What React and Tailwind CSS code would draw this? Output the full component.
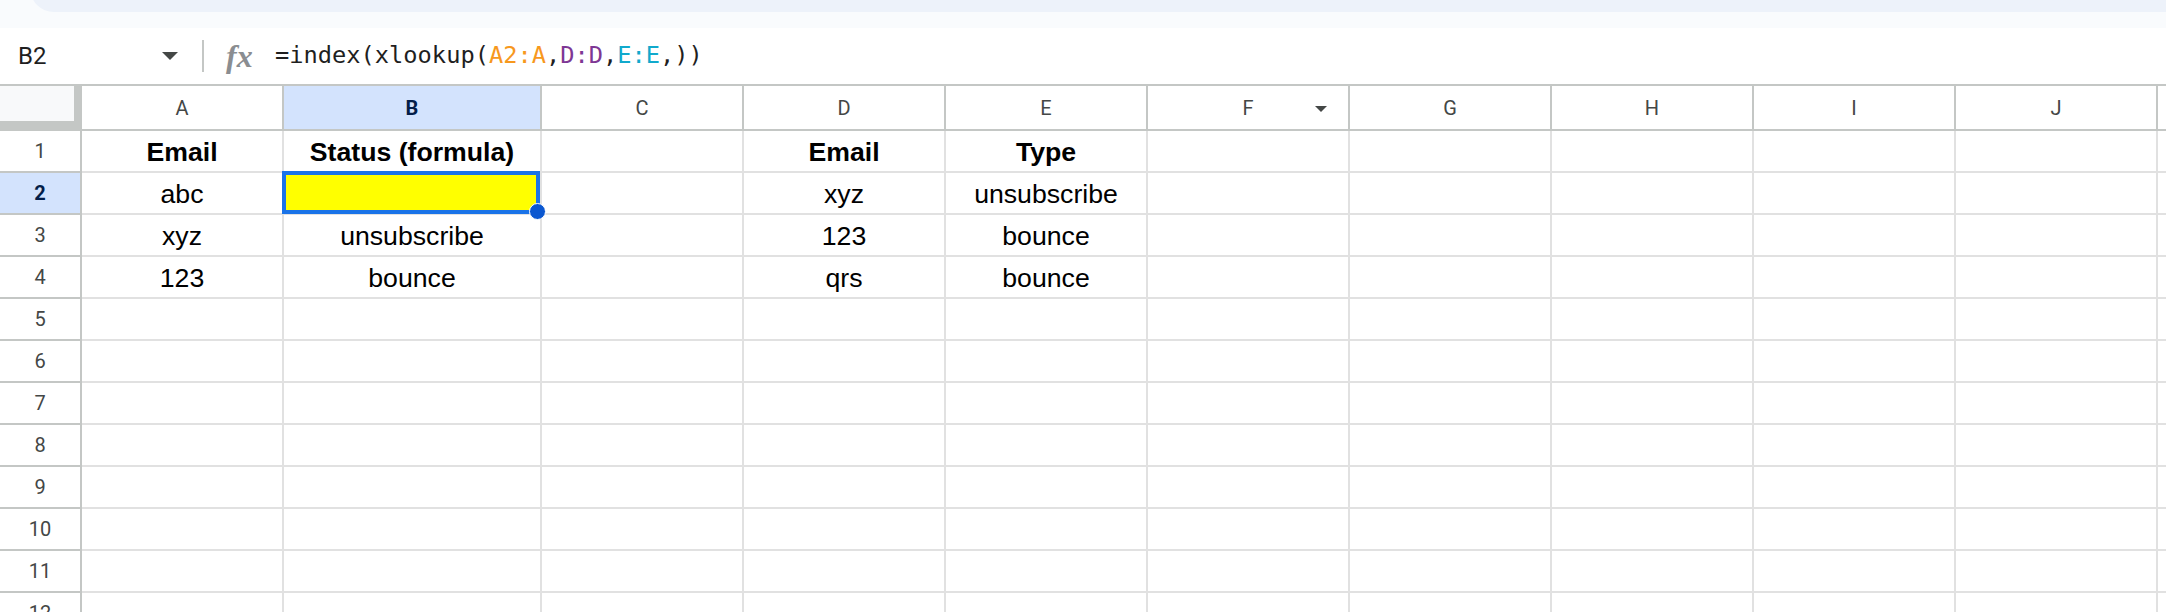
const COLS = ["A", "B", "C", "D", "E", "F", "G", "H", "I", "J", "K"];
const GRID = "grid grid-cols-[82px_202px_258px_202px_202px_202px_202px_202px_202px_202px_202px_202px]";

const data = {
  1: { A: "Email", B: "Status (formula)", D: "Email", E: "Type" },
  2: { A: "abc", D: "xyz", E: "unsubscribe" },
  3: { A: "xyz", B: "unsubscribe", D: "123", E: "bounce" },
  4: { A: "123", B: "bounce", D: "qrs", E: "bounce" },
};

const Caret = ({ className }) => (
  <svg width="16" height="8" viewBox="0 0 16 8" className={className}>
    <polygon points="0,0 16,0 8,8" fill="#444746" />
  </svg>
);

const FormulaBar = () => (
  <div className="flex h-[56px] items-center bg-white">
    <div className="flex w-[190px] items-center justify-between pl-[18px] pr-[12px]">
      <span className="font-['Roboto'] text-[24px] text-[#1f1f1f]">B2</span>
      <Caret />
    </div>
    <div className="ml-[12px] h-[32px] w-[2px] bg-[#c4c7c5]" />
    <span className="ml-[22px] w-[30px] font-['Liberation_Serif'] text-[32px] font-bold italic leading-none text-[#8a8d91]">
      fx
    </span>
    <span className="ml-[19px] font-['DejaVu_Sans_Mono'] text-[23.7px] text-[#1f1f1f]">
      =index(xlookup(<span className="text-[#f7981d]">A2:A</span>,<span className="text-[#7e3794]">D:D</span>,
      <span className="text-[#11a9cc]">E:E</span>,))
    </span>
  </div>
);

const HeaderRow = () => (
  <div className={`${GRID} h-[47px] border-t-2 border-[#c4c7c5]`}>
    <div className="border-b-[10px] border-r-[8px] border-[#c4c7c5] bg-[#f8f9fa]" />
    {COLS.map((col) => {
      const selected = col === "B";
      return (
        <div
          key={col}
          className={`relative flex items-center justify-center border-b-2 border-r-2 border-[#c4c7c5] font-['Roboto'] text-[20px] ${
            selected ? "bg-[#d3e3fd] font-bold text-[#041e49]" : "bg-white text-[#444746]"
          }`}
        >
          {col !== "K" && col}
          {col === "F" && <Caret className="absolute right-[19px] top-[20px] h-[6px]" />}
        </div>
      );
    })}
  </div>
);

const Row = ({ n }) => {
  const row = data[n] || {};
  return (
    <div className={`${GRID} h-[42px]`}>
      <div
        className={`flex items-center justify-center border-b-2 border-r-2 border-[#c4c7c5] font-['Roboto'] text-[20px] ${
          n === 2 ? "bg-[#d3e3fd] font-bold text-[#041e49]" : "bg-white text-[#444746]"
        }`}
      >
        {n}
      </div>
      {COLS.map((col) => {
        const active = n === 2 && col === "B";
        return (
          <div
            key={col}
            className={`relative flex items-end justify-center border-b-2 border-r-2 border-[#e1e1e1] pb-[4px] font-['Liberation_Sans'] text-[26.67px] leading-[30px] text-black ${
              n === 1 ? "font-bold" : ""
            } ${active ? "z-10 bg-[#ffff00]" : "bg-white"}`}
          >
            {row[col] || ""}
            {active && (
              <div className="absolute -left-[2px] -top-[2px] bottom-[-1px] right-0 border-4 border-[#1a73e8]">
                <div className="absolute -bottom-[10px] -right-[10px] h-[17px] w-[17px] rounded-full border border-white bg-[#0b57d0]" />
              </div>
            )}
          </div>
        );
      })}
    </div>
  );
};

export default function App() {
  const rows = Array.from({ length: 12 }, (_, i) => i + 1);
  return (
    <div className="h-[612px] w-[2166px] overflow-hidden bg-white">
      <div className="bg-[#f9fbfd]">
        <div className="flex h-[12px] flex-col justify-end overflow-hidden pl-[30px]">
          <div className="h-[40px] shrink-0 rounded-bl-[24px] bg-[#edf2fa]" />
        </div>
        <div className="h-[16px]" />
      </div>
      <FormulaBar />
      <HeaderRow />
      {rows.map((n) => (
        <Row key={n} n={n} />
      ))}
    </div>
  );
}
